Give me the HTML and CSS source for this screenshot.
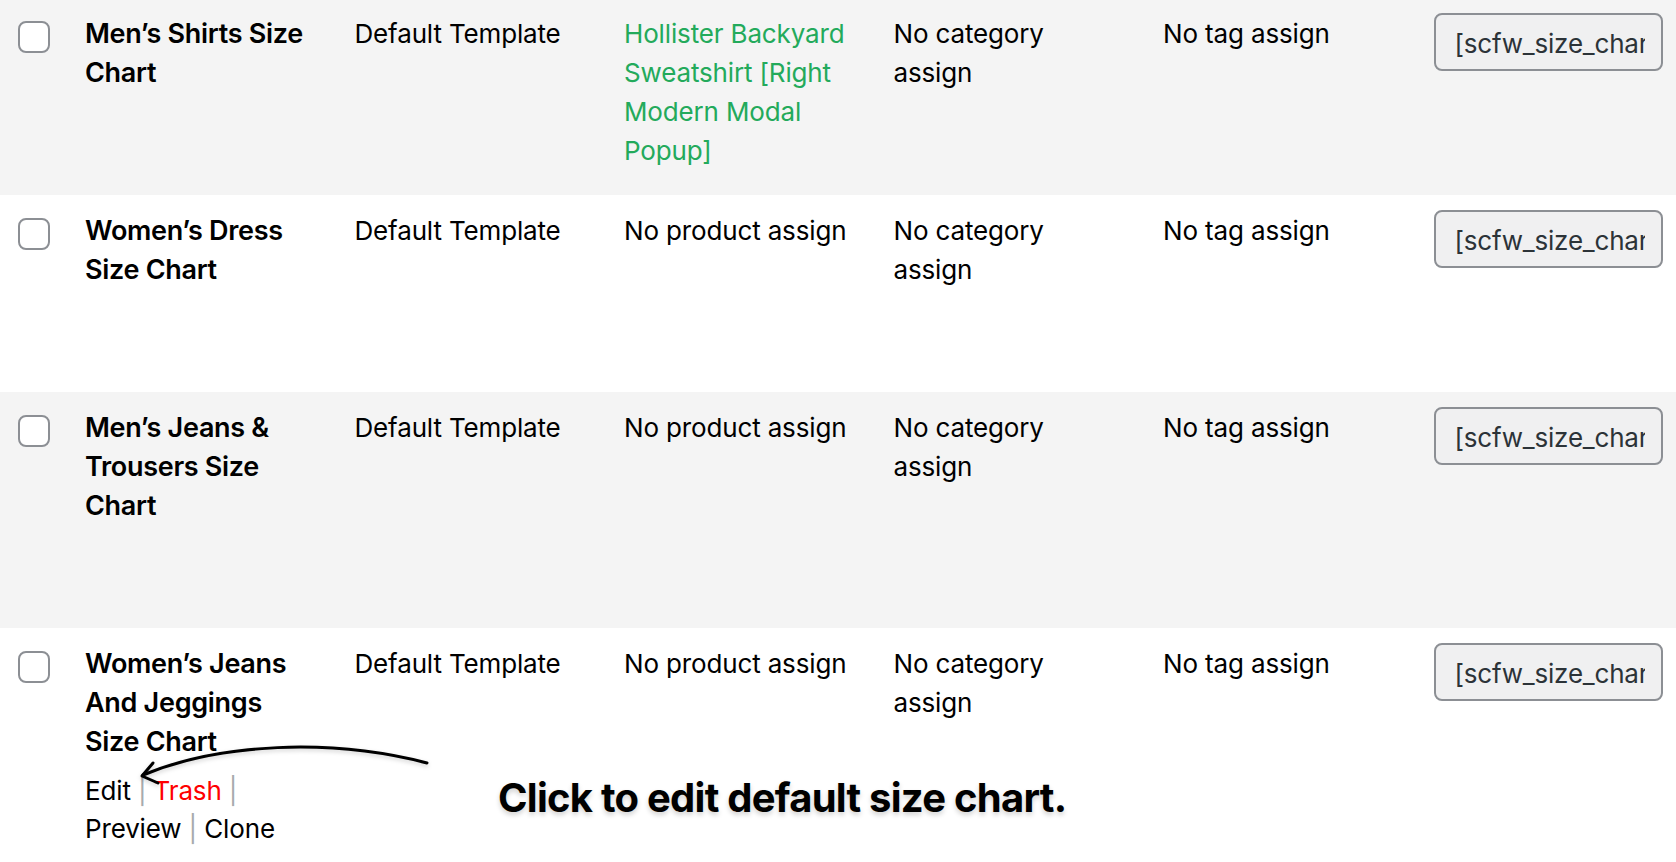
FILE: index.html
```html
<!DOCTYPE html>
<html lang="en">
<head>
<meta charset="utf-8">
<title>Size Charts</title>
<link rel="stylesheet" href="styles.css">
</head>
<body>
<div class="page">
  <table class="list">
    <colgroup>
      <col class="c-cb">
      <col class="c-col">
      <col class="c-col">
      <col class="c-col">
      <col class="c-col">
      <col class="c-col">
      <col class="c-last">
    </colgroup>
    <tbody>
      <tr class="row odd">
        <td class="cb"><input type="checkbox" class="check"></td>
        <td class="title-cell">
          <strong class="row-title">Men’s Shirts Size Chart</strong>
          <div class="row-actions hidden"><span>Edit</span> <span class="sep">|</span> <span>Trash</span> <span class="sep">|</span> <span>Preview</span> <span class="sep">|</span> <span>Clone</span></div>
        </td>
        <td>Default Template</td>
        <td><span class="link-green">Hollister Backyard Sweatshirt [Right Modern Modal Popup]</span></td>
        <td>No category assign</td>
        <td>No tag assign</td>
        <td class="sc-cell"><input class="shortcode" type="text" readonly value="[scfw_size_chart id=&quot;101&quot;]"></td>
      </tr>
      <tr class="row">
        <td class="cb"><input type="checkbox" class="check"></td>
        <td class="title-cell">
          <strong class="row-title">Women’s Dress Size Chart</strong>
          <div class="row-actions hidden"><span>Edit</span> <span class="sep">|</span> <span>Trash</span> <span class="sep">|</span> <span>Preview</span> <span class="sep">|</span> <span>Clone</span></div>
        </td>
        <td>Default Template</td>
        <td>No product assign</td>
        <td>No category assign</td>
        <td>No tag assign</td>
        <td class="sc-cell"><input class="shortcode" type="text" readonly value="[scfw_size_chart id=&quot;102&quot;]"></td>
      </tr>
      <tr class="row odd">
        <td class="cb"><input type="checkbox" class="check"></td>
        <td class="title-cell">
          <strong class="row-title">Men’s Jeans &amp; Trousers Size Chart</strong>
          <div class="row-actions hidden"><span>Edit</span> <span class="sep">|</span> <span>Trash</span> <span class="sep">|</span> <span>Preview</span> <span class="sep">|</span> <span>Clone</span></div>
        </td>
        <td>Default Template</td>
        <td>No product assign</td>
        <td>No category assign</td>
        <td>No tag assign</td>
        <td class="sc-cell"><input class="shortcode" type="text" readonly value="[scfw_size_chart id=&quot;103&quot;]"></td>
      </tr>
      <tr class="row">
        <td class="cb"><input type="checkbox" class="check"></td>
        <td class="title-cell">
          <strong class="row-title">Women’s Jeans And Jeggings Size Chart</strong>
          <div class="row-actions"><span class="act">Edit</span> <span class="sep">|</span> <span class="act trash">Trash</span> <span class="sep">|</span> <span class="act">Preview</span> <span class="sep">|</span> <span class="act">Clone</span></div>
        </td>
        <td>Default Template</td>
        <td>No product assign</td>
        <td>No category assign</td>
        <td>No tag assign</td>
        <td class="sc-cell"><input class="shortcode" type="text" readonly value="[scfw_size_chart id=&quot;104&quot;]"></td>
      </tr>
    </tbody>
  </table>

  <svg class="arrow" width="1676" height="862" viewBox="0 0 1676 862" aria-hidden="true">
    <defs>
      <filter id="sh" x="-10%" y="-50%" width="120%" height="200%">
        <feDropShadow dx="0" dy="2" stdDeviation="2" flood-color="#000" flood-opacity="0.18"/>
      </filter>
    </defs>
    <g filter="url(#sh)" fill="none" stroke="#000" stroke-width="3" stroke-linecap="round" stroke-linejoin="round">
      <path d="M427 763 C 330 738, 220 743, 143 775"/>
      <path d="M153 763 L142 776 L158 783"/>
    </g>
  </svg>
  <p class="note">Click to edit default size chart.</p>
</div>
</body>
</html>
```

FILE: styles.css
```css
html, body {
  margin: 0;
  padding: 0;
  background: #fff;
  overflow: hidden;
}

body {
  font-family: Inter, "Noto Sans", sans-serif;
  color: #000;
  width: 1676px;
  height: 862px;
}

.page {
  position: relative;
  width: 1676px;
  height: 862px;
  overflow: hidden;
}

.list {
  width: 1676px;
  table-layout: fixed;
  border-collapse: collapse;
  border-spacing: 0;
  margin-top: -2px;
  font-size: 26px;
  line-height: 39px;
  letter-spacing: -0.15px;
}

.c-cb { width: 65px; }
.c-col { width: 269.5px; }
.c-last { width: 263.5px; }

.row.odd { background: #f4f4f4; }

.list td {
  vertical-align: top;
  padding: 16px 20px;
  overflow: hidden;
  color: #000;
}

.list td.cb {
  padding: 0 0 0 18px;
}

.check {
  appearance: none;
  -webkit-appearance: none;
  display: block;
  box-sizing: border-box;
  width: 32px;
  height: 32px;
  margin: 23px 0 0 0;
  border: 2px solid #8c8f94;
  border-radius: 8px;
  background: #fff;
}

.row-title {
  display: block;
  font-size: 27px;
  font-weight: 600;
  letter-spacing: -0.3px;
  color: #000;
}

.row-actions {
  padding-top: 11px;
  font-size: 26px;
  line-height: 38px;
  color: #000;
}

.row-actions.hidden { visibility: hidden; }

.row-actions .sep { color: #a7aaad; }
.row-actions .trash { color: #f00; }

.link-green { color: #23aa5b; }

.list td.sc-cell {
  padding: 15px 0 0 21px;
}

.shortcode {
  display: block;
  box-sizing: border-box;
  width: 229px;
  height: 58px;
  margin: 0;
  padding: 2px 16px 0 19px;
  border: 2px solid #8c8f94;
  border-radius: 8px;
  background: #f0f0f1;
  color: #2c3338;
  font-family: Inter, "Noto Sans", sans-serif;
  font-size: 26px;
  letter-spacing: -0.2px;
  outline: none;
}

.arrow {
  position: absolute;
  left: 0;
  top: 0;
  pointer-events: none;
}

.note {
  position: absolute;
  left: 498px;
  top: 774px;
  margin: 0;
  font-size: 40px;
  line-height: 48px;
  font-weight: 700;
  letter-spacing: -0.75px;
  color: #000;
  white-space: nowrap;
  text-shadow: 0 3px 5px rgba(0, 0, 0, 0.18);
}
```
